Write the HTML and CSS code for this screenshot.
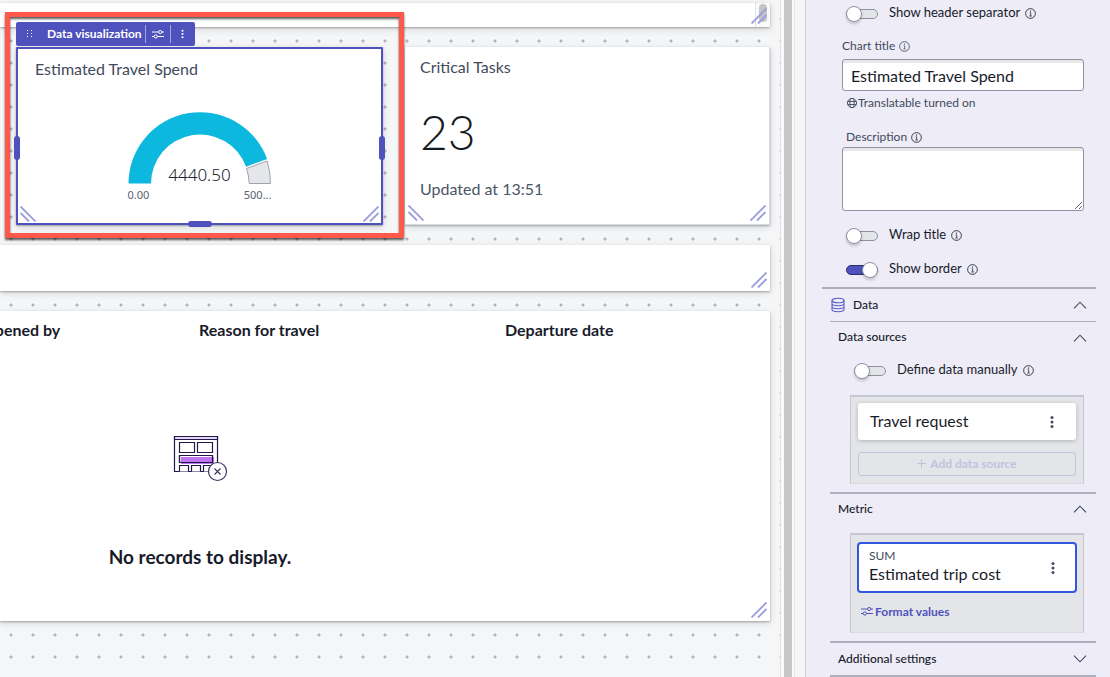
FILE: index.html
```html
<!DOCTYPE html>
<html lang="en">
<head>
<meta charset="utf-8">
<title>Dashboard editor</title>
<link rel="stylesheet" href="styles.css">
</head>
<body>
<svg class="sprite" aria-hidden="true">
  <symbol id="info" viewBox="0 0 12 12"><circle cx="6" cy="6" r="5.300" fill="none" stroke="currentColor" stroke-width=".9"/><path d="M5 5.300h1.200v3.200M4.700 8.700h2.800" fill="none" stroke="currentColor" stroke-width=".8"/><circle cx="6" cy="3.400" r=".7" fill="currentColor"/></symbol>
  <symbol id="sliders" viewBox="0 0 12 10"><path d="M0 3h6.500M10 3h2M0 7.500h2M5.500 7.500H12" stroke="currentColor" fill="none"/><circle cx="8.200" cy="3" r="1.600" fill="none" stroke="currentColor"/><circle cx="3.800" cy="7.500" r="1.600" fill="none" stroke="currentColor"/></symbol>
  <symbol id="kebab" viewBox="0 0 4 14"><circle cx="2" cy="2.500" r="1.500"/><circle cx="2" cy="7" r="1.500"/><circle cx="2" cy="11.500" r="1.500"/></symbol>
  <symbol id="chevron" viewBox="0 0 14 8"><path d="M1 7.300L7 1.200l6 6.100" fill="none" stroke="currentColor" stroke-width="1.100"/></symbol>
  <symbol id="grip" viewBox="0 0 16 16"><path d="M.5 15.500L15.500.5M7 15.500l8.500-8.500" fill="none" stroke="#9a9bdc" stroke-width="1.800"/></symbol>
</svg>
<div class="app">
  <main class="canvas">
    <section class="card strip-top"><span class="mini-track"></span><svg class="grip right"><use href="#grip"/></svg></section>
    <div class="widgets">
      <section class="card selected">
        <div class="toolbar">
          <svg class="drag" viewBox="0 0 6 8"><path d="M0 .5h1m3 0h1M0 3.500h1m3 0h1M0 6.500h1m3 0h1" stroke="#fff" fill="none"/></svg>
          <span class="tool-name">Data visualization</span>
          <button class="tool" aria-label="Configure"><svg class="ic-sliders"><use href="#sliders"/></svg></button>
          <button class="tool" aria-label="More"><svg class="ic-dots"><use href="#kebab"/></svg></button>
        </div>
        <h2 class="title">Estimated Travel Spend</h2>
        <figure class="gauge">
          <svg class="arc" viewBox="0 0 144 73"><path d="M.5 72.500A71.500 71.500 0 0 1 139.100 48L118.100 55.800A49 49 0 0 0 23 72.500Z" fill="#0cb8de"/><path d="M139.100 50A71.500 71.500 0 0 1 142.500 72.500H121.200A49 49 0 0 0 118.500 57.500Z" fill="#e5e6ea" stroke="#a0a4b0"/></svg>
          <figcaption class="value">4440.50</figcaption>
          <div class="range"><span>0.00</span><span>500...</span></div>
        </figure>
        <svg class="grip left"><use href="#grip"/></svg>
        <svg class="grip right"><use href="#grip"/></svg>
        <i class="handle west"></i><i class="handle east"></i><i class="handle south"></i>
        <div class="highlight"></div>
      </section>
      <section class="card score">
        <h2 class="title">Critical Tasks</h2>
        <p class="number">23</p>
        <p class="updated">Updated at 13:51</p>
        <svg class="grip left"><use href="#grip"/></svg>
        <svg class="grip right"><use href="#grip"/></svg>
      </section>
    </div>
    <section class="card strip"><svg class="grip right"><use href="#grip"/></svg></section>
    <section class="card records">
      <table class="list"><thead><tr><th class="c1">Opened by</th><th class="c2">Reason for travel</th><th>Departure date</th></tr></thead></table>
      <div class="empty">
        <svg class="empty-art" viewBox="-1 0 56 48"><g fill="#fff" stroke="#20194a" stroke-width="1.200"><path d="M1.500 1.500h43v35h-43z"/><path d="M1.500 1.500h43v3h-43z" fill="#e6d8fa"/><path d="M6.500 7.500h15v10h-15zM24.500 7.500h15v10h-15z"/><path d="M6.500 20.500h33v7h-33zM6.500 36.500v-6h9v6M18.500 36.500v-6h9v6M30.500 36.500v-6h9v6"/></g><path d="M8 22h33v7H8z" fill="#bd76ed"/><path d="M6.500 20.500h33v7h-33z" fill="none" stroke="#20194a" stroke-width="1.200"/><circle cx="44.500" cy="36.500" r="9" fill="#fff" stroke="#39345f" stroke-width="1.200"/><path d="M41.500 33.500l6 6m0-6l-6 6" stroke="#39345f" stroke-width="1.100"/></svg>
        <p class="empty-text">No records to display.</p>
      </div>
      <svg class="grip right"><use href="#grip"/></svg>
    </section>
  </main>
  <div class="gutter"><span class="thumb"></span></div>
  <aside class="panel">
    <div class="fields">
      <div class="switch-row first"><input class="switch" type="checkbox" id="sep"><label for="sep">Show header separator</label><svg class="info"><use href="#info"/></svg></div>
      <div class="label-row"><label for="ct">Chart title</label><svg class="info grey"><use href="#info"/></svg></div>
      <input class="text" id="ct" type="text" value="Estimated Travel Spend">
      <p class="hint"><svg class="globe" viewBox="0 0 12 12"><g fill="none" stroke="currentColor" stroke-width=".9"><circle cx="6" cy="6" r="4.600"/><ellipse cx="6" cy="6" rx="2.200" ry="4.600"/><path d="M1.800 4.500h8.400M1.800 7.500h8.400"/></g></svg>Translatable turned on</p>
      <div class="label-row desc"><label for="ds">Description</label><svg class="info"><use href="#info"/></svg></div>
      <textarea class="text area" id="ds"></textarea>
      <div class="switch-row wrap"><input class="switch" type="checkbox" id="wr"><label for="wr">Wrap title</label><svg class="info"><use href="#info"/></svg></div>
      <div class="switch-row border"><input class="switch" type="checkbox" id="bo" checked><label for="bo">Show border</label><svg class="info"><use href="#info"/></svg></div>
    </div>
    <button class="section main"><svg class="db" viewBox="0 0 14 16"><g fill="none" stroke="#5b5cc8" stroke-width="1.100"><ellipse cx="7" cy="3.500" rx="6" ry="2.300"/><path d="M1 3.500v9c0 3 12 3 12 0v-9M1 6.500c0 3 12 3 12 0M1 9.500c0 3 12 3 12 0"/></g></svg><span>Data</span><svg class="chev"><use href="#chevron"/></svg></button>
    <div class="group">
      <button class="section thin"><span>Data sources</span><svg class="chev"><use href="#chevron"/></svg></button>
      <div class="switch-row manual"><input class="switch" type="checkbox" id="dm"><label for="dm">Define data manually</label><svg class="info"><use href="#info"/></svg></div>
      <div class="box sources">
        <div class="item"><span>Travel request</span><button class="more" aria-label="More options"><svg class="ic-more"><use href="#kebab"/></svg></button></div>
        <button class="add" disabled><svg class="plus" viewBox="0 0 9 9"><path d="M4.500 0v9M0 4.500h9" stroke="currentColor"/></svg>Add data source</button>
      </div>
      <button class="section"><span>Metric</span><svg class="chev"><use href="#chevron"/></svg></button>
      <div class="box metric">
        <div class="item active"><span><small class="agg">SUM</small>Estimated trip cost</span><button class="more" aria-label="More options"><svg class="ic-more"><use href="#kebab"/></svg></button></div>
        <button class="format"><svg class="ic-sliders"><use href="#sliders"/></svg>Format values</button>
      </div>
      <button class="section last"><span>Additional settings</span><svg class="chev down"><use href="#chevron"/></svg></button>
      <hr class="end">
    </div>
  </aside>
</div>
</body>
</html>
```
FILE: styles.css
```css
* { box-sizing: border-box; }
body { margin: 0; overflow: hidden; font-family: Lato, sans-serif; color: #181b2a; background: #f5f6f8; }
button { font: inherit; color: inherit; border: 0; background: none; padding: 0; }
p, h2, figure { margin: 0; }
svg { display: block; flex: none; }
.sprite { position: absolute; width: 0; height: 0; }
.app { display: flex; height: 100vh; }

.canvas {
  flex: 1; min-width: 0; overflow: hidden;
  display: flex; flex-direction: column; gap: 20px; padding: 3px 10px 0 0;
  background: radial-gradient(circle at 11px 11px, #b4b4ba 1px, transparent 2px) 0 8px / 22px 22px #f5f6f8;
}
.card { position: relative; background: #fff; box-shadow: 0 1px 2px rgba(0,0,0,.3), 0 2px 8px rgba(0,0,0,.12); }
.strip-top { height: 24px; flex: none; }
.mini-track { position: absolute; right: 0; top: 0; width: 15px; height: 24px; background: #fafafa; border-left: 1px solid #e2e2e2; }
.mini-track::after { content: ""; position: absolute; left: 3px; top: 1px; width: 8px; height: 18px; border-radius: 4px; background: #c4c4c6; }
.strip { height: 46px; flex: none; }
.grip { position: absolute; bottom: 3px; width: 16px; height: 16px; }
.grip.right { right: 3px; }
.grip.left { left: 3px; transform: scaleX(-1); }
.widgets { display: grid; grid-template-columns: 367fr 365fr; gap: 22px; padding-left: 16px; min-height: 178px; }
.title { font-size: 16px; line-height: 20px; font-weight: 400; color: #424a5c; }

.selected { border: 2px solid #4f52bd; border-radius: 1px; padding: 10px 17px 0; }
.selected .grip { bottom: 1px; }
.selected .grip.left { left: 2px; }
.selected .grip.right { right: 2px; }
.toolbar {
  position: absolute; z-index: 2; left: -2px; top: -27px; height: 24px;
  display: flex; align-items: center; border-radius: 2px; background: #4f52bd; color: #fff;
}
.drag { width: 6px; height: 8px; margin: 0 14px 0 11px; }
.tool-name { font-size: 12px; line-height: 16px; font-weight: 700; padding: 0 3px 1px 0; }
.tool { width: 25px; height: 18px; display: grid; place-items: center; border-left: 1px solid #a3a5e0; }
.ic-sliders { width: 12px; height: 10px; }
.ic-dots { width: 3px; height: 10px; fill: #fff; }
.gauge { width: 144px; margin: 32px auto 0; }
.arc { width: 144px; height: 73px; }
.value { margin-top: -20px; text-align: center; font: 300 17px/22px "Noto Sans", sans-serif; color: #20232e; }
.range { display: flex; justify-content: space-between; margin-top: 1px; font: 11px/16px "Noto Sans", sans-serif; color: #5b6170; }
.handle { position: absolute; background: #4f52bd; border-radius: 3px; }
.west, .east { width: 6px; height: 24px; top: 87px; }
.west { left: -4px; }
.east { right: -4px; }
.south { width: 24px; height: 6px; bottom: -4px; left: calc(50% - 12px); }
.highlight { position: absolute; z-index: 3; inset: -37px -23px -15px -13px; border: 5px solid #ff594c; filter: drop-shadow(0 2px 1px rgba(0,0,0,.65)); pointer-events: none; }

.score { padding: 10px 15px 0; border: 1px solid #d9d9e4; border-left: 0; border-top: 0; }
.number { font-size: 48px; line-height: 58px; font-weight: 300; color: #151a20; margin-top: 26px; }
.updated { font-size: 16px; line-height: 20px; color: #4a5565; margin-top: 18px; }
.records { flex: none; height: 310px; }
.list { width: calc(100% + 18px); margin-left: -18px; border-collapse: collapse; table-layout: fixed; text-align: left; font-size: 16px; line-height: 20px; }
.list th { padding: 9px 0; font-weight: 700; }
.c1 { width: 217px; }
.c2 { width: 306px; }
.empty { width: 400px; display: flex; flex-direction: column; align-items: center; padding-top: 86px; }
.empty-art { width: 56px; height: 48px; }
.empty-text { margin-top: 62px; font-size: 19px; line-height: 24px; font-weight: 700; }

.gutter { flex: none; width: 25px; padding-left: 3px; border-left: 1px solid #e1e1e3; background: linear-gradient(90deg, #fafafa 13px, #e6e6e8 13px, #e6e6e8 14px, #f5f6f8 14px); }
.thumb { display: block; width: 8px; height: 100%; background: #c6c6c6; }

.panel { flex: none; width: 305px; overflow: hidden; padding: 0 14px 0 16px; background: #edecf7; border-left: 1px solid #d1d1de; }
.fields { padding: 4px 12px 9px 20px; }
.switch-row { display: flex; align-items: center; padding-left: 4px; height: 18px; font-size: 13px; line-height: 18px; }
.switch-row label { margin: 0 5px 2px 11px; }
.switch { appearance: none; margin: 2px 0 0; width: 32px; height: 10px; border: 1px solid #8e92a0; border-radius: 5px; background: #e4e5e8; position: relative; }
.switch::before { content: ""; position: absolute; top: -4px; left: -1px; width: 16px; height: 16px; border: 1px solid #8e92a0; border-radius: 50%; background: #fff; box-shadow: 0 2px 3px rgba(0,0,0,.18); box-sizing: border-box; }
.switch:checked { background: #4f52bd; border-color: #2d2f6e; }
.switch:checked::before { left: 15px; }
.info { width: 11px; height: 11px; color: #181b2a; }
.grey { color: #424a5c; }
.label-row { display: flex; align-items: center; gap: 4px; margin-top: 16px; height: 16px; font-size: 12px; line-height: 16px; color: #424a5c; }
.text { display: block; width: 100%; height: 32px; margin-top: 5px; padding: 0 8px; font: 16px/20px Lato, sans-serif; color: #181b2a; background: #fff; border: 1px solid #8e92a3; border-radius: 3px; box-shadow: inset 0 3px #e8e8e8; }
.hint { display: flex; align-items: center; margin-top: 4px; padding-left: 4px; font-size: 12px; line-height: 16px; color: #424a5c; }
.globe { width: 12px; height: 12px; }
.desc { margin-top: 18px; padding-left: 4px; }
.area { height: 64px; margin-top: 2px; }
.wrap { margin-top: 15px; }
.border { margin-top: 16px; }
.section { display: flex; align-items: center; width: 100%; height: 32px; border-top: 2px solid #acafbd; padding: 0 9px 0 8px; font-size: 12px; font-weight: 500; color: #181b2a; }
.section span { margin-bottom: 2px; }
.main { height: 34px; }
.last { height: 34px; }
.db { width: 14px; height: 16px; margin: 0 8px 0 1px; }
.chev { width: 14px; height: 8px; margin-left: auto; color: #424a5c; }
.down { transform: scaleY(-1); }
.group { padding-left: 8px; }
.thin { border-top-width: 1px; }
.manual { margin-top: 8px; padding-left: 24px; }
.box { margin: 0 12px 8px 20px; padding: 5px 7px 7px; background: #e4e5e9; border: 1px solid #c5c7d2; border-top-width: 2px; border-bottom-color: #d9dae2; }
.sources { margin-top: 16px; padding-top: 6px; }
.item { display: flex; align-items: center; justify-content: space-between; height: 37px; padding: 0 20px 0 12px; border-radius: 3px; background: #fff; box-shadow: 0 1px 4px rgba(0,0,0,.22); font-size: 16px; line-height: 18px; }
.item span { margin-bottom: 2px; }
.more { width: 8px; height: 20px; display: grid; place-items: center; }
.ic-more { width: 4px; height: 14px; fill: #424a5c; }
.add { display: flex; align-items: center; justify-content: center; gap: 4px; width: 100%; height: 24px; margin-top: 12px; padding-bottom: 2px; border: 1px solid #c2c4e2; border-radius: 3px; font-size: 12px; font-weight: 700; color: #c0c2e0; }
.plus { width: 9px; height: 9px; }
.metric { margin-top: 9px; padding: 7px 6px 6px; height: 100px; }
.active { height: 51px; padding: 0 18px 0 10px; border: 2px solid #3455e0; box-shadow: none; border-radius: 4px; }
.active span { margin-bottom: 5px; }
.agg { display: block; font-size: 12px; color: #424a5c; }
.format { display: flex; align-items: center; gap: 2px; margin: 10px 0 0 4px; height: 16px; font-size: 12px; font-weight: 700; color: #4f52bd; }
.end { margin: 0; border: 0; height: 2px; background: #acafbd; }
```
